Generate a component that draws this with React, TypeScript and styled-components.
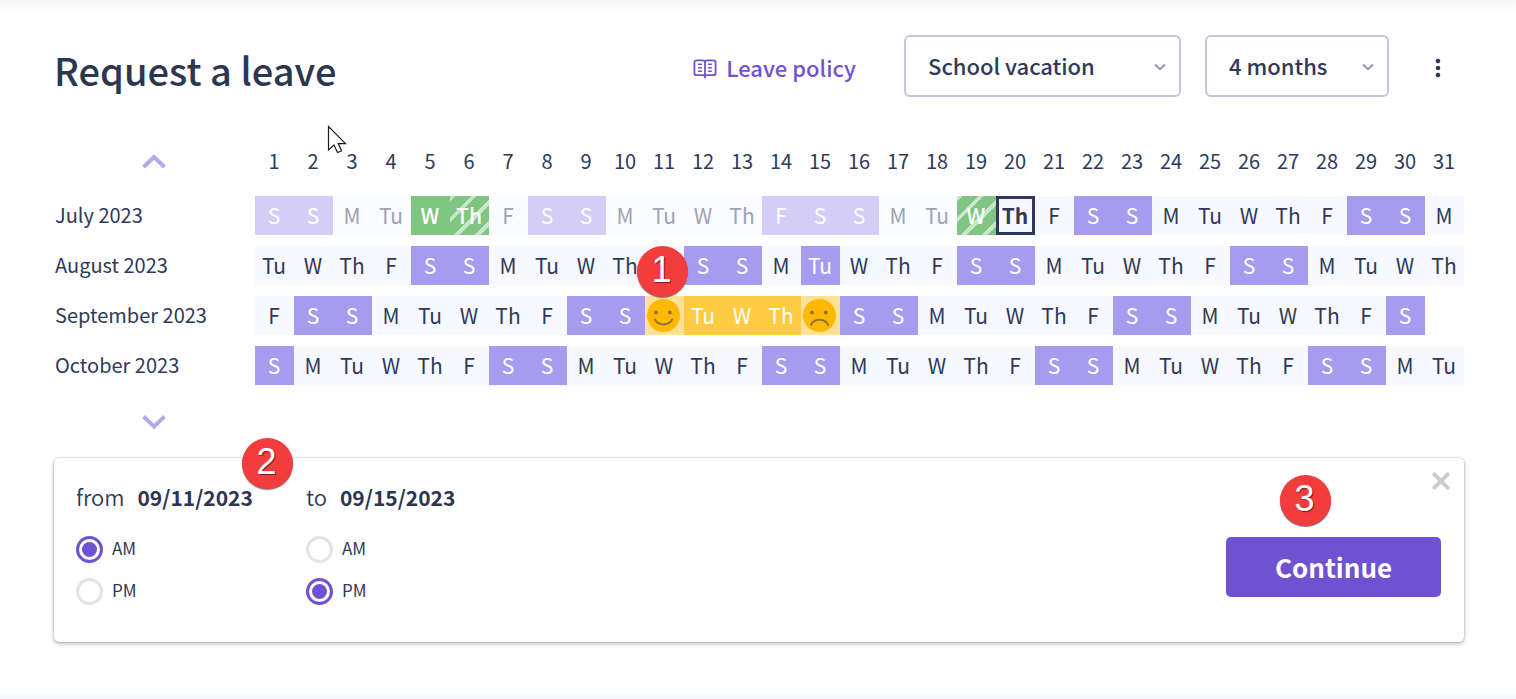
import React from "react";
import styled, { createGlobalStyle, css } from "styled-components";

const GlobalStyle = createGlobalStyle`
  *, *::before, *::after { box-sizing: border-box; }
  body {
    margin: 0;
    background: #f8f9fd;
    color: #2e3a59;
    font-family: "Noto Sans CJK JP", "Noto Sans", sans-serif;
    font-size: 20px;
    line-height: 30px;
  }
  button, select, input { font: inherit; color: inherit; }
`;

const Page = styled.main`
  position: relative;
  padding: 35px 52px 53px 54px;
  background: linear-gradient(#f6f6f6, #ffffff 12px) #ffffff;
`;

const Header = styled.header`
  display: flex;
  align-items: center;
  gap: 24px;
  margin-bottom: 31px;
`;

const Title = styled.h1`
  flex: 1;
  margin: 0;
  padding-top: 8px;
  font-size: 38px;
  line-height: 48px;
  font-weight: 500;
  color: #2d3650;
`;

const PolicyLink = styled.a`
  display: flex;
  align-items: center;
  gap: 9px;
  margin-right: 24px;
  padding-top: 2px;
  color: #6f52d1;
  font-size: 22px;
  font-weight: 500;
  text-decoration: none;

  svg { margin-top: 3px; }
`;

const SelectBox = styled.div<{ $width: number }>`
  position: relative;
  width: ${(p) => p.$width}px;

  select {
    display: block;
    width: 100%;
    height: 62px;
    padding: 0 40px 2px 22px;
    border: 2px solid #c1c7da;
    border-radius: 6px;
    background: #ffffff;
    appearance: none;
    font-size: 22px;
    font-weight: 500;
  }

  svg {
    position: absolute;
    right: 15px;
    top: 28px;
    pointer-events: none;
  }
`;

const IconButton = styled.button<{ $width: number }>`
  display: flex;
  align-items: center;
  justify-content: center;
  width: ${(p) => p.$width}px;
  height: 30px;
  margin: 0;
  padding: 0;
  border: 0;
  background: none;
`;

const MoreButton = styled(IconButton)`
  padding: 4px 1px 0 0;
`;

const Calendar = styled.table`
  width: 100%;
  table-layout: fixed;
  border-collapse: separate;
  border-spacing: 0 11px;

  th, td { padding: 0; font-weight: 400; }
`;

const PagerCell = styled.td<{ $height: number }>`
  width: 201px;
  height: ${(p) => p.$height}px;
`;

const DayNumber = styled.th`
  && { padding: 0 1px 2px 0; }
  text-align: center;
`;

const MonthName = styled.th`
  && { padding-bottom: 1px; }
  text-align: left;
  text-indent: 1px;
`;

type Kind =
  | "work" | "off" | "past" | "pastOff" | "leave" | "leaveHalf"
  | "today" | "picked" | "edge" | "none";

const stripes = css`
  background: repeating-linear-gradient(
    135deg, #c9e6ca 0 4px, #81c582 4px 15px
  );
`;

const kinds: Record<Kind, ReturnType<typeof css>> = {
  work: css`background: #f8f9fe;`,
  off: css`background: #a69cef; color: #ffffff;`,
  past: css`background: #fbfcff; color: #9da3b4;`,
  pastOff: css`background: #d3cdf7; color: #ffffff;`,
  leave: css`background: #81c582; color: #ffffff; && { font-weight: 500; }`,
  leaveHalf: css`${stripes} color: #ffffff; && { font-weight: 500; }`,
  today: css`
    background: #f8f9fe;
    box-shadow: inset 0 0 0 3px #2f3760;
    && { font-weight: 700; }
  `,
  picked: css`background: #ffcb42; color: #ffffff;`,
  edge: css`background: #ffe195; && { padding: 0 2px 0 0; }`,
  none: css``,
};

const Day = styled.td<{ $kind: Kind }>`
  position: relative;
  height: 39px;
  font-size: 21px;
  text-align: center;
  vertical-align: middle;
  && { padding: 0 1px 2px 0; }
  ${(p) => kinds[p.$kind]}

  > svg { display: block; margin: 0 auto; }
`;

const Badge = styled.span<{ $left: number; $top: number }>`
  position: absolute;
  z-index: 1;
  left: ${(p) => p.$left}px;
  top: ${(p) => p.$top}px;
  width: 51px;
  height: 51px;
  padding-right: 2px;
  border-radius: 50%;
  background: #f33d3d;
  box-shadow: 0 1px 1px #777777;
  color: #ffffff;
  font: 36px/47px "Liberation Sans", Arial, sans-serif;
  text-align: center;
  text-shadow: 1px 1px 1px #7a1c1c;
`;

const Card = styled.form`
  position: relative;
  display: flex;
  justify-content: space-between;
  min-height: 184px;
  padding: 8px 23px 24px 22px;
  border-radius: 5px;
  background: #ffffff;
  box-shadow: 0 0 2px rgba(0, 0, 0, 0.3), 0 2px 4px rgba(0, 0, 0, 0.25);
`;

const Periods = styled.div`
  display: flex;
  padding-top: 15px;
`;

const Period = styled.fieldset`
  display: flex;
  flex-direction: column;
  gap: 12px;
  width: 230px;
  margin: 0;
  padding: 0;
  border: 0;
`;

const PeriodTitle = styled.legend`
  margin-bottom: 22px;
  padding: 0;
  font-size: 22px;
  font-weight: 350;

  strong { margin-left: 8px; font-weight: 700; color: #2d3650; font-size: 21px; }
`;

const Choice = styled.label`
  display: flex;
  align-items: center;
  gap: 9px;
  font-size: 17px;
  line-height: 28px;
`;

const ChoiceText = styled.span`
  padding-bottom: 2px;
`;

const Radio = styled.input`
  width: 27px;
  height: 27px;
  margin: 0;
  padding: 3px;
  border: 3px solid #e4e4e4;
  border-radius: 50%;
  appearance: none;
  background: #ffffff content-box;

  &:checked { border-color: #6f52d1; background-color: #6f52d1; }
`;

const Dot = styled.span`
  display: flex;
  height: 30px;
  align-items: center;
`;

const Actions = styled.div`
  display: flex;
  flex-direction: column;
  align-items: flex-end;
  gap: 41px;
`;

const CloseButton = styled(IconButton)`
  margin-right: -15px;
`;

const Submit = styled.div`
  position: relative;
`;

const SubmitButton = styled.button`
  width: 215px;
  height: 60px;
  padding: 0;
  border: 0;
  border-radius: 5px;
  background: #6f52d1;
  color: #ffffff;
  font-size: 26px;
  font-weight: 700;
`;

const Pointer = styled.svg`
  position: absolute;
  left: 327px;
  top: 125px;
`;

const BookIcon = () => (
  <svg width="24" height="20" viewBox="0 0 24 20" fill="none" stroke="#6f52d1" strokeLinecap="round" aria-hidden="true">
    <path strokeWidth="1.8" d="M12 2.4C11.4 1.6 10.6 1.3 9.4 1.3H3.6C2.2 1.3 1.4 2.1 1.4 3.4V14.2C1.4 15.6 2.2 16.2 3.6 16.2H9.6C10.8 16.2 11.5 16.4 12 16.8C12.5 16.4 13.2 16.2 14.4 16.2H20.4C21.8 16.2 22.6 15.6 22.6 14.2V3.4C22.6 2.1 21.8 1.3 20.4 1.3H14.6C13.4 1.3 12.6 1.6 12 2.4ZM12 2.4V18.4" />
    <path strokeWidth="1.6" d="M5.6 5.2H8.4M5.6 8.7H8.4M5.6 12.2H8.4M15.6 5.2H18.4M15.6 8.7H18.4M15.6 12.2H18.4" />
  </svg>
);

const SmallChevron = () => (
  <svg width="12" height="9" viewBox="0 0 12 9" fill="none" stroke="#929ab5" strokeWidth="2" aria-hidden="true">
    <path d="M1 1.5L6 6.2L11 1.5" />
  </svg>
);

const PagerChevron = ({ up }: { up?: boolean }) => (
  <svg width="24" height="16" viewBox="0 0 24 16" fill="none" stroke="#b7a8e8" strokeWidth="4" aria-hidden="true">
    <path d={up ? "M1.5 13L12 3L22.5 13" : "M1.5 2.5L12 12.5L22.5 2.5"} />
  </svg>
);

const Face = ({ happy }: { happy?: boolean }) => (
  <svg width="33" height="33" viewBox="0 0 33 33" role="img" aria-label={happy ? "First day" : "Last day"}>
    <circle cx="16.5" cy="16.5" r="16.5" fill="#ffb800" />
    <g fill="#8f7434">
      <circle cx="9" cy="13.5" r="1.9" />
      <circle cx="22.8" cy="13.5" r="1.9" />
    </g>
    <path
      d={happy ? "M8 20.5C11 27 22 27 25 20.5" : "M8 26C11 19 22 19 25 26"}
      fill="none" stroke="#8f7434" strokeWidth="2" strokeLinecap="round"
    />
  </svg>
);

const weekdays = ["S", "M", "Tu", "W", "Th", "F", "S"];

interface Month {
  name: string;
  firstWeekday: number;
  length: number;
  special?: Record<number, Kind>;
  pastUntil?: number;
  covered?: number;
}

const months: Month[] = [
  {
    name: "July 2023", firstWeekday: 6, length: 31, pastUntil: 19,
    special: { 5: "leave", 6: "leaveHalf", 14: "pastOff", 19: "leaveHalf", 20: "today" },
  },
  { name: "August 2023", firstWeekday: 2, length: 31, special: { 15: "off" }, covered: 11 },
  {
    name: "September 2023", firstWeekday: 5, length: 30,
    special: { 11: "edge", 12: "picked", 13: "picked", 14: "picked", 15: "edge" },
  },
  { name: "October 2023", firstWeekday: 0, length: 31 },
];

const dayNumbers = Array.from({ length: 31 }, (_, i) => i + 1);

function kindOf(month: Month, day: number): Kind {
  if (day > month.length) return "none";
  const special = month.special?.[day];
  if (special) return special;
  const weekday = (month.firstWeekday + day - 1) % 7;
  const weekend = weekday === 0 || weekday === 6;
  if (day <= (month.pastUntil ?? 0)) return weekend ? "pastOff" : "past";
  return weekend ? "off" : "work";
}

function DayCell({ month, day }: { month: Month; day: number }) {
  const kind = kindOf(month, day);
  if (kind === "edge") {
    return (
      <Day $kind={kind}>
        <Face happy={day === 11} />
        {day === 11 && <Badge $left={-8} $top={-50}>1</Badge>}
      </Day>
    );
  }
  // The step badge sits on top of the covered day, so its letter is left out.
  const blank = kind === "none" || month.covered === day;
  return (
    <Day $kind={kind}>
      {blank ? null : weekdays[(month.firstWeekday + day - 1) % 7]}
    </Day>
  );
}

function PeriodPicker({ name, date, value }: { name: string; date: string; value: string }) {
  return (
    <Period>
      <PeriodTitle>{name} <strong>{date}</strong></PeriodTitle>
      {["AM", "PM"].map((half) => (
        <Choice key={half}>
          <Dot><Radio type="radio" name={name} value={half} defaultChecked={half === value} /></Dot>
          <ChoiceText>{half}</ChoiceText>
        </Choice>
      ))}
    </Period>
  );
}

export default function App() {
  return (
    <>
      <GlobalStyle />
      <Page>
        <Header>
          <Title>Request a leave</Title>
          <PolicyLink href="#policy"><BookIcon />Leave policy</PolicyLink>
          <SelectBox $width={277}>
            <select aria-label="Leave type"><option>School vacation</option></select>
            <SmallChevron />
          </SelectBox>
          <SelectBox $width={184}>
            <select aria-label="Period shown"><option>4 months</option></select>
            <SmallChevron />
          </SelectBox>
          <MoreButton $width={51} type="button" aria-label="More options">
            <svg width="6" height="20" viewBox="0 0 6 20" fill="#2e3a59">
              <circle cx="3" cy="3" r="2.3" />
              <circle cx="3" cy="10" r="2.3" />
              <circle cx="3" cy="17" r="2.3" />
            </svg>
          </MoreButton>
        </Header>

        <Calendar>
          <thead>
            <tr>
              <PagerCell $height={46}>
                <IconButton $width={200} type="button" aria-label="Previous months"><PagerChevron up /></IconButton>
              </PagerCell>
              {dayNumbers.map((n) => <DayNumber key={n} scope="col">{n}</DayNumber>)}
            </tr>
          </thead>
          <tbody>
            {months.map((month) => (
              <tr key={month.name}>
                <MonthName scope="row">{month.name}</MonthName>
                {dayNumbers.map((n) => <DayCell key={n} month={month} day={n} />)}
              </tr>
            ))}
          </tbody>
          <tfoot>
            <tr>
              <PagerCell $height={51}>
                <IconButton $width={200} type="button" aria-label="Next months"><PagerChevron /></IconButton>
              </PagerCell>
            </tr>
          </tfoot>
        </Calendar>

        <Card>
          <Badge $left={188} $top={-20}>2</Badge>
          <Periods>
            <PeriodPicker name="from" date="09/11/2023" value="AM" />
            <PeriodPicker name="to" date="09/15/2023" value="PM" />
          </Periods>
          <Actions>
            <CloseButton $width={30} type="button" aria-label="Close">
              <svg width="18" height="18" viewBox="0 0 18 18" stroke="#cccccc" strokeWidth="4" strokeLinecap="round">
                <path d="M2.4 2.4L15.6 15.6M15.6 2.4L2.4 15.6" />
              </svg>
            </CloseButton>
            <Submit>
              <Badge $left={54} $top={-62}>3</Badge>
              <SubmitButton type="button">Continue</SubmitButton>
            </Submit>
          </Actions>
        </Card>

        <Pointer width="20" height="29" viewBox="0 0 20 29" fill="#ffffff" stroke="#1b1b2b" strokeWidth="1.2" aria-hidden="true">
          <path d="M1.5 1.5V25L7 20L10.5 27.5L14.5 26L11.3 18.6H18.5Z" />
        </Pointer>
      </Page>
    </>
  );
}
